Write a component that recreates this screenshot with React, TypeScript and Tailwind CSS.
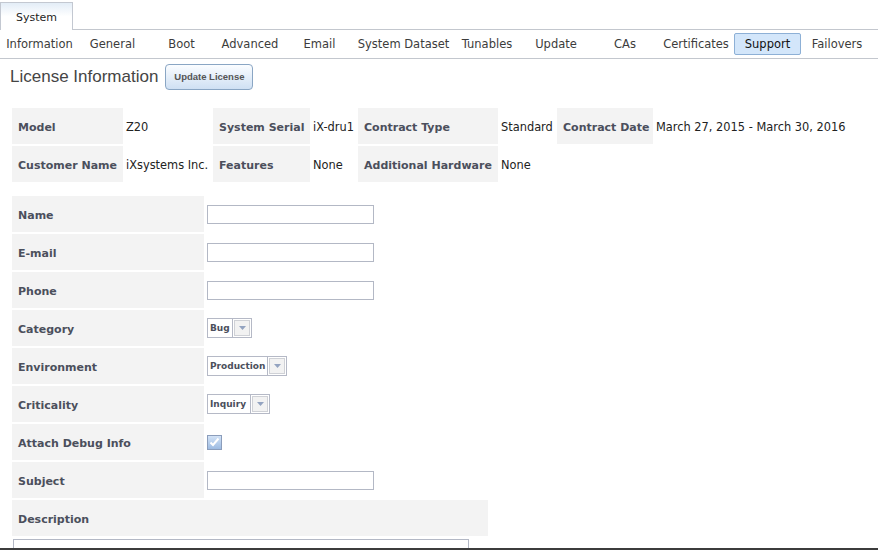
import { Fragment } from 'react'

const TABS: { label: string; w: number; active?: boolean }[] = [
  { label: 'Information', w: 73 },
  { label: 'General', w: 73 },
  { label: 'Boot', w: 65 },
  { label: 'Advanced', w: 72 },
  { label: 'Email', w: 67 },
  { label: 'System Dataset', w: 101 },
  { label: 'Tunables', w: 66 },
  { label: 'Update', w: 72 },
  { label: 'CAs', w: 66 },
  { label: 'Certificates', w: 76 },
  { label: 'Support', w: 67, active: true },
  { label: 'Failovers', w: 72 },
]

const INFO_ROWS = [
  ['Model', 'Z20', 'System Serial', 'iX-dru1', 'Contract Type', 'Standard', 'Contract Date', 'March 27, 2015 - March 30, 2016'],
  ['Customer Name', 'iXsystems Inc.', 'Features', 'None', 'Additional Hardware', 'None', '', ''],
]

const INFO_COLS = [111, 86, 97, 44, 140, 55, 96, 190]

function TextInput() {
  return <div className="w-[167px] h-[19px] border border-[#b3b8c5] bg-white" />
}

function Select({ value, w }: { value: string; w: number }) {
  return (
    <div className="inline-flex h-[20px] border border-[#b5b9c6] bg-white" style={{ width: w }}>
      <div className="flex-1 flex items-center pl-[2px] pt-[2px] text-[9px] font-bold text-[#4b4f5c]">{value}</div>
      <div className="w-[19px] border-l border-[#b5b9c6] p-[1px]">
        <div className="w-full h-full border border-[#cfd1d6] bg-[#f2f2f2] flex items-center justify-center">
          <svg width="7" height="4" viewBox="0 0 7 4">
            <path d="M0 0h7L3.5 4z" fill="#93a3c0" />
          </svg>
        </div>
      </div>
    </div>
  )
}

function Checkbox() {
  return (
    <div className="w-[15px] h-[15px] border border-[#8b9dbb] bg-gradient-to-b from-[#d3e3f6] to-[#9dbbe2] flex items-center justify-center">
      <svg width="11" height="10" viewBox="0 0 11 10">
        <path d="M1.5 5.5l2.5 2.5 5.5-6.5" stroke="#fff" strokeWidth="2" fill="none" />
      </svg>
    </div>
  )
}

const FORM_ROWS: { label: string; field: React.ReactNode }[] = [
  { label: 'Name', field: <TextInput /> },
  { label: 'E-mail', field: <TextInput /> },
  { label: 'Phone', field: <TextInput /> },
  { label: 'Category', field: <Select value="Bug" w={45} /> },
  { label: 'Environment', field: <Select value="Production" w={80} /> },
  { label: 'Criticality', field: <Select value="Inquiry" w={63} /> },
  { label: 'Attach Debug Info', field: <Checkbox /> },
  { label: 'Subject', field: <TextInput /> },
]

export default function App() {
  return (
    <div className="w-[878px] h-[550px] overflow-hidden bg-white border-b-2 border-[#3c3c3c] font-['DejaVu_Sans',sans-serif]">
      {/* top tab */}
      <div className="flex h-[30px]">
        <div className="mt-[2px] w-[73px] h-[28px] pt-[4px] border border-b-0 border-[#c3c8d1] bg-gradient-to-b from-[#e3edf7] via-white to-white flex items-center justify-center text-[11px] text-[#1e1e1e]">
          System
        </div>
        <div className="flex-1 border-b border-[#c3c7ce]" />
      </div>

      {/* sub tabs */}
      <div className="flex items-center h-[29px] pl-[3px] border-b border-[#c3c7ce]">
        {TABS.map((t) => (
          <div
            key={t.label}
            className={
              'h-[22px] pt-[2px] flex items-center justify-center text-[11.5px] whitespace-nowrap ' +
              (t.active
                ? 'bg-[#d3e6fa] border border-[#8db0d6] rounded-[2px] text-[#111]'
                : 'text-[#3c3c3c]')
            }
            style={{ width: t.w }}
          >
            {t.label}
          </div>
        ))}
      </div>

      <div className="pl-[10px]">
        {/* header */}
        <div className="flex items-center gap-[7px] pt-[5px]">
          <h2 className="font-['Liberation_Sans',sans-serif] text-[17px] text-[#454545]">License Information</h2>
          <button className="h-[26px] w-[88px] rounded-[4px] border border-[#8aa6c4] bg-gradient-to-b from-[#fbfdff] to-[#cfe0f3] font-['Liberation_Sans',sans-serif] text-[9.5px] font-bold text-[#555]">
            Update License
          </button>
        </div>

        {/* license table */}
        <table className="mt-[16px] table-fixed border-separate border-spacing-[2px]">
          <colgroup>
            {INFO_COLS.map((w, i) => (
              <col key={i} style={{ width: w }} />
            ))}
          </colgroup>
          <tbody>
            {INFO_ROWS.map((row, r) => (
              <tr key={r} className="h-[36px]">
                {row.map((cell, c) =>
                  c % 2 === 0 ? (
                    <td key={c} className={'pl-[6px] pt-[4px] text-[11px] font-bold text-[#4b4f5c] whitespace-nowrap ' + (cell ? 'bg-[#f3f3f3]' : '')}>
                      {cell}
                    </td>
                  ) : (
                    <td key={c} className="pl-[1px] pt-[4px] text-[11.4px] text-[#222] whitespace-nowrap">
                      {cell}
                    </td>
                  )
                )}
              </tr>
            ))}
          </tbody>
        </table>

        {/* support form */}
        <table className="mt-[10px] table-fixed border-separate border-spacing-[2px] text-[11px]">
          <colgroup>
            <col style={{ width: 192 }} />
            <col style={{ width: 282 }} />
          </colgroup>
          <tbody>
            {FORM_ROWS.map((row) => (
              <Fragment key={row.label}>
                <tr className="h-[36px]">
                  <td className="bg-[#f3f3f3] pl-[6px] pt-[4px] font-bold text-[#4b4f5c] whitespace-nowrap">{row.label}</td>
                  <td className="pl-[1px]">{row.field}</td>
                </tr>
              </Fragment>
            ))}
            <tr className="h-[36px]">
              <td colSpan={2} className="bg-[#f3f3f3] pl-[6px] pt-[4px] font-bold text-[#4b4f5c]">
                Description
              </td>
            </tr>
            <tr>
              <td colSpan={2} className="pl-[1px] pt-[1px]">
                <div className="w-[456px] h-[120px] border border-[#b3b8c5]" />
              </td>
            </tr>
          </tbody>
        </table>
      </div>
    </div>
  )
}
